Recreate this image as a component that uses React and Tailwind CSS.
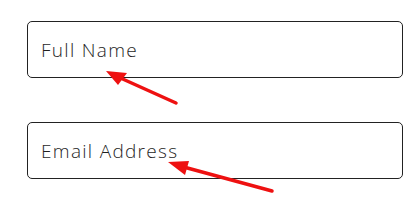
export default function App() {
  return (
    <div className="relative w-[417px] h-[202px] bg-white" style={{ fontFamily: '"Open Sans", "Noto Sans", sans-serif' }}>
      <div className="flex flex-col gap-[44px] pt-[21px] pl-[27px] w-[403px]">
        <input
          type="text"
          placeholder="Full Name"
          className="h-[57px] w-full rounded-[5px] border border-[#222] px-[13px] text-[19px] font-light tracking-[1.3px] text-[#222] placeholder:text-[#1f1f1f] outline-none"
        />
        <input
          type="email"
          placeholder="Email Address"
          className="h-[57px] w-full rounded-[5px] border border-[#222] px-[13px] text-[19px] font-light tracking-[1.3px] text-[#222] placeholder:text-[#1f1f1f] outline-none"
        />
      </div>
      {/* annotation arrows */}
      <svg className="absolute inset-0 pointer-events-none" width="417" height="202" viewBox="0 0 417 202">
        <line x1="176" y1="103" x2="116" y2="76" stroke="#ee1111" strokeWidth="3.5" strokeLinecap="round" />
        <polygon points="106,71 127,73 118,85" fill="#ee1111" />
        <line x1="272" y1="191" x2="180" y2="166" stroke="#ee1111" strokeWidth="3.5" strokeLinecap="round" />
        <polygon points="168,162 189,161 185,175" fill="#ee1111" />
      </svg>
    </div>
  )
}
